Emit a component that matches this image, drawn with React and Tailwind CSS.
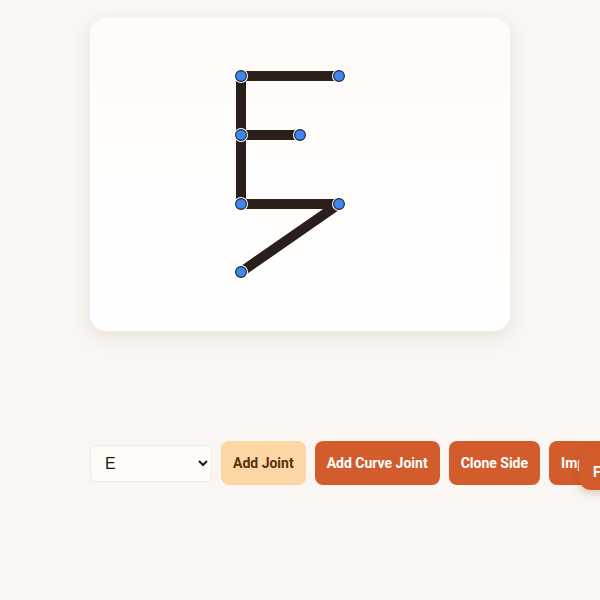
import React from "react";

const joints = [
  [151, 58],
  [249, 58],
  [151, 117],
  [210, 117],
  [151, 186],
  [249, 186],
  [151, 254],
];

const segments = [
  [0, 1],
  [0, 4],
  [2, 3],
  [4, 5],
  [5, 6],
];

function GlyphCanvas() {
  return (
    <svg width="420" height="313" viewBox="0 0 420 313" className="block">
      {segments.map(([a, b], i) => (
        <line
          key={i}
          x1={joints[a][0]}
          y1={joints[a][1]}
          x2={joints[b][0]}
          y2={joints[b][1]}
          stroke="#2a1f1b"
          strokeWidth="10"
          strokeLinecap="butt"
        />
      ))}
      {joints.map(([x, y], i) => (
        <g key={i}>
          <circle cx={x} cy={y} r="7" fill="#ffffff" />
          <circle cx={x} cy={y} r="5.4" fill="#3f86f0" stroke="#1c2430" strokeWidth="1.1" />
        </g>
      ))}
    </svg>
  );
}

export default function App() {
  return (
    <div
      className="relative min-h-screen overflow-hidden bg-[#f9f6f3]"
      style={{ fontFamily: "Roboto, 'Liberation Sans', sans-serif" }}
    >
      <div className="mx-auto w-[420px] pt-[18px]">
        <div className="h-[313px] overflow-hidden rounded-2xl bg-gradient-to-b from-[#fffbf7] to-white shadow-[0_6px_18px_rgba(120,90,60,0.12)]">
          <GlyphCanvas />
        </div>

        <div className="mt-[110px] flex items-center gap-[9px] whitespace-nowrap">
          <select
            defaultValue="E"
            className="h-[37px] w-[122px] shrink-0 rounded-md border border-[#efe8e0] bg-[#fffcf8] pl-[10px] pr-1 text-base text-[#1a1a1a]"
            style={{ fontFamily: "'Liberation Sans', Arial, sans-serif" }}
          >
            <option value="E">E</option>
          </select>
          <button
            type="button"
            className="h-[44px] shrink-0 rounded-lg border border-[#fcd3a8] bg-[#fed6a6] px-[11px] text-sm font-bold text-[#5b2e12]"
          >
            Add Joint
          </button>
          <button
            type="button"
            className="h-[44px] shrink-0 rounded-lg bg-[#d35c2c] px-3 text-sm font-bold text-white"
          >
            Add Curve Joint
          </button>
          <button
            type="button"
            className="h-[44px] shrink-0 rounded-lg bg-[#d35c2c] px-3 text-sm font-bold text-white"
          >
            Clone Side
          </button>
          <button
            type="button"
            className="h-[44px] shrink-0 rounded-lg bg-[#d35c2c] px-3 text-sm font-bold text-white"
          >
            Import
          </button>
        </div>
      </div>

      <div className="absolute left-[579px] top-[447px] flex h-[43px] w-[90px] items-center rounded-xl bg-[#d35c2c] pl-[14px] pt-[6px] text-sm font-bold text-white shadow-[0_3px_8px_rgba(120,60,20,0.25)]">
        Feedback
      </div>
    </div>
  );
}
